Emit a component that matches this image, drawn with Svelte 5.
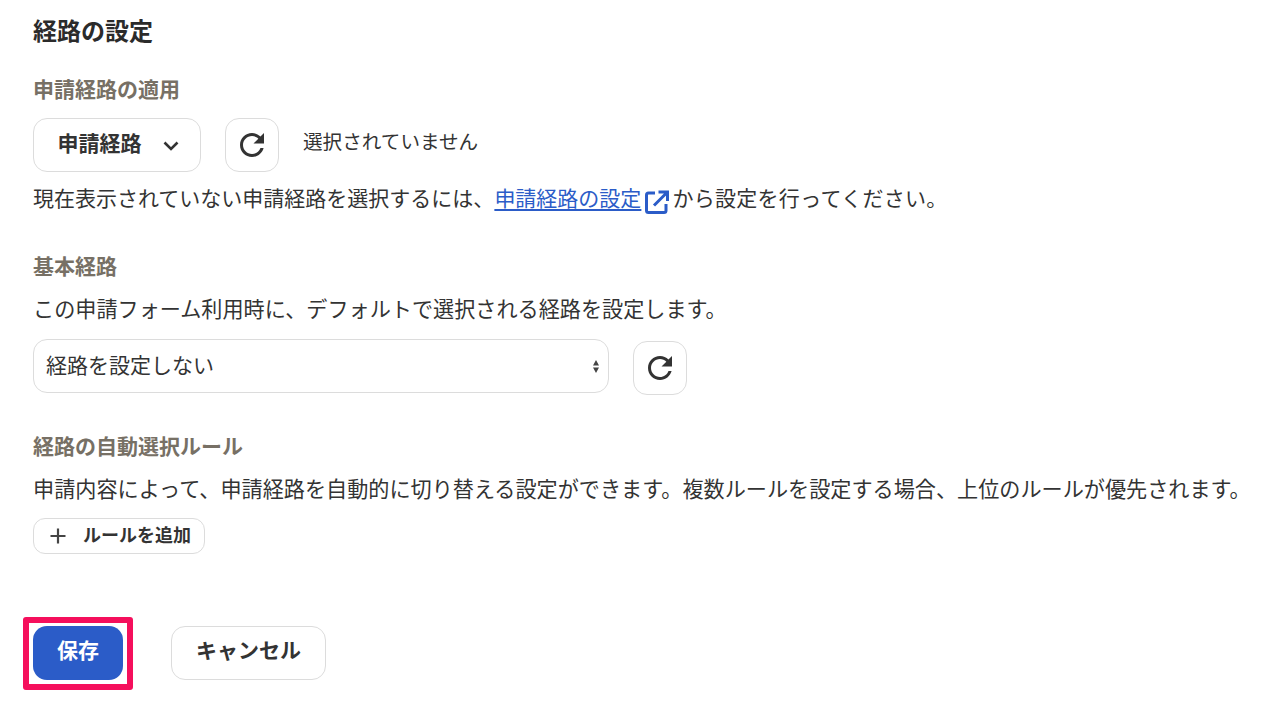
<script>
	const reloadPath = 'M17.65 6.35C16.2 4.9 14.21 4 12 4c-4.42 0-7.99 3.58-7.99 8s3.57 8 7.99 8c3.73 0 6.84-2.55 7.73-6h-2.08c-.82 2.33-3.04 4-5.65 4-3.31 0-6-2.69-6-6s2.69-6 6-6c1.66 0 3.14.69 4.22 1.78L13 11h7V4l-2.35 2.35z';
</script>

<main class="page">
	<h2 class="title">経路の設定</h2>

	<section class="apply">
		<h3 class="label">申請経路の適用</h3>
		<div class="row">
			<button class="btn route" type="button">
				<span>申請経路</span>
				<svg class="chevron" viewBox="0 0 16 10" width="16" height="10"><path d="M1.5 1.5 L8 8 L14.5 1.5" fill="none" stroke="currentColor" stroke-width="2.6" /></svg>
			</button>
			<button class="btn square" type="button" aria-label="更新">
				<svg viewBox="0 0 24 24" width="36" height="36"><path d={reloadPath} fill="currentColor" /></svg>
			</button>
			<span class="none">選択されていません</span>
		</div>
		<p class="text help">現在表示されていない申請経路を選択するには、<a href="#top">申請経路の設定</a><svg class="ext" viewBox="0 0 24 24" width="24" height="24"><path d="M10 3 H3.5 Q1.5 3 1.5 5 V20.5 Q1.5 22.5 3.5 22.5 H19 Q21 22.5 21 20.5 V14 M9 15.5 L21.5 3 M13.5 2 H22.5 V11" fill="none" stroke="currentColor" stroke-width="3" /></svg><span class="tail">から設定を行ってください。</span></p>
	</section>

	<section class="basic">
		<h3 class="label">基本経路</h3>
		<p class="text desc">この申請フォーム利用時に、デフォルトで選択される経路を設定します。</p>
		<div class="row select-row">
			<div class="select">
				<span>経路を設定しない</span>
				<svg viewBox="0 0 6 13" width="6" height="13"><path d="M3 0 L6 5.5 H0 Z M3 13 L0 7.5 H6 Z" fill="currentColor" /></svg>
			</div>
			<button class="btn square" type="button" aria-label="更新">
				<svg viewBox="0 0 24 24" width="36" height="36"><path d={reloadPath} fill="currentColor" /></svg>
			</button>
		</div>
	</section>

	<section class="rules">
		<h3 class="label">経路の自動選択ルール</h3>
		<p class="text desc">申請内容によって、申請経路を自動的に切り替える設定ができます。複数ルールを設定する場合、上位のルールが優先されます。</p>
		<button class="btn add" type="button">
			<svg viewBox="0 0 16 16" width="16" height="16"><path d="M8 0.5 V15.5 M0.5 8 H15.5" stroke="currentColor" stroke-width="2.2" /></svg>
			<span>ルールを追加</span>
		</button>
	</section>

	<div class="actions">
		<div class="highlight">
			<button class="btn save" type="button">保存</button>
		</div>
		<button class="btn cancel" type="button">キャンセル</button>
	</div>
</main>

<style>
	:global(body) {
		margin: 0;
		background: #fff;
		overflow: hidden;
	}

	.page {
		box-sizing: border-box;
		height: 715px;
		padding: 14px 0 0 33px;
		font-family: "Noto Sans CJK JP", "Noto Sans", sans-serif;
		font-size: 21.14px;
		line-height: 32px;
		color: #333;
	}

	.title {
		margin: 0;
		font-size: 24px;
		font-weight: 700;
		line-height: 32px;
		color: #2b2b2b;
	}

	.label {
		margin: 0;
		font-size: 21px;
		font-weight: 700;
		line-height: 32px;
		color: #777065;
	}

	.text {
		margin: 0;
		white-space: nowrap;
	}

	.help {
		font-size: 21px;
	}

	.tail {
		letter-spacing: 0.3px;
	}

	.text a {
		color: #2b5cc8;
		text-decoration-thickness: 2px;
		text-underline-offset: 3px;
	}

	.ext {
		color: #2b5cc8;
		vertical-align: -8px;
		margin: 0 3px 0 4px;
	}

	.apply {
		margin-top: 26px;
	}

	.row {
		display: flex;
		align-items: flex-start;
	}

	.apply .row {
		margin-top: 14px;
		margin-bottom: 9px;
	}

	.btn {
		box-sizing: border-box;
		display: inline-flex;
		align-items: center;
		justify-content: center;
		padding: 0;
		background: #fff;
		border: 1px solid #dcdcdc;
		border-radius: 14px;
		font: inherit;
		font-size: 21px;
		font-weight: 700;
		color: #333;
	}

	.route {
		width: 168px;
		height: 54px;
		gap: 21px;
		padding: 0 0 0 2px;
	}

	.route span {
		padding-bottom: 7px;
	}

	.chevron {
		margin-top: 1px;
	}

	.square {
		width: 54px;
		height: 54px;
	}

	.apply .square {
		margin-left: 24px;
	}

	.none {
		margin-left: 24px;
		margin-top: 7px;
		font-size: 19.6px;
	}

	.basic {
		margin-top: 35px;
	}

	.desc {
		margin-top: 11px;
	}

	.select-row {
		margin-top: 15px;
	}

	.select {
		box-sizing: border-box;
		display: flex;
		align-items: center;
		justify-content: space-between;
		width: 576px;
		height: 54px;
		padding: 0 9px 0 12px;
		border: 1px solid #dcdcdc;
		border-radius: 14px;
		margin-right: 24px;
	}

	.select span {
		padding-bottom: 5px;
		font-size: 21px;
	}

	.select svg {
		color: #444;
	}

	.select-row .square {
		margin-top: 2px;
	}

	.rules {
		margin-top: 34px;
	}

	.add {
		width: 172px;
		height: 36px;
		gap: 17px;
		margin-top: 14px;
		padding-left: 3px;
		border-radius: 12px;
		font-size: 18px;
		line-height: 24px;
	}

	.add svg {
		color: #444;
	}

	.add span {
		padding-bottom: 5px;
	}

	.actions {
		display: flex;
		align-items: flex-start;
		margin-top: 63px;
		margin-left: -10px;
	}

	.highlight {
		padding: 9px 10px 10px;
		outline: 6px solid #f50f5c;
		outline-offset: -6px;
		border-radius: 3px;
	}

	.save {
		width: 90px;
		height: 54px;
		padding-bottom: 9px;
		background: #2b5cc8;
		border: 0;
		color: #fff;
	}

	.cancel {
		width: 155px;
		height: 54px;
		margin-left: 38px;
		margin-top: 9px;
		padding-bottom: 9px;
	}
</style>
